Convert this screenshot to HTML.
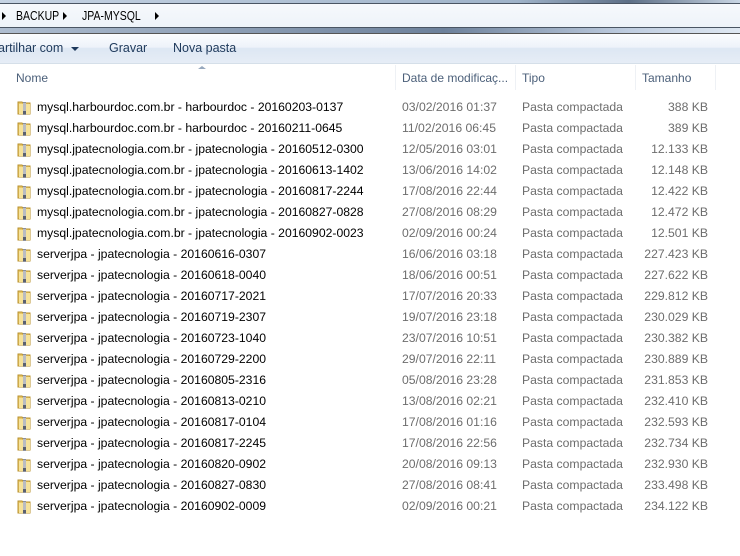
<!DOCTYPE html>
<html><head><meta charset="utf-8"><style>
*{margin:0;padding:0;box-sizing:border-box}
body{width:740px;height:556px;overflow:hidden;background:#fff;font-family:"Liberation Sans",sans-serif;font-size:12px;position:relative}
.top{position:absolute;left:0;top:0;width:740px;height:4px;background:linear-gradient(90deg,#c5d3e3,#9fb3c9 70%,#5d6f86 85%,#c9d6e4)}
.addr{position:absolute;left:-2px;top:3px;width:760px;height:25px;border:1px solid #4a5563;background:linear-gradient(#f6f9fc,#eef3f9);}
.addr span{position:absolute;top:5px;font-size:12.5px;color:#000;transform-origin:0 0;transform:scaleX(0.84)}
.tri{position:absolute;top:8px;width:0;height:0;border-top:4px solid transparent;border-bottom:4px solid transparent;border-left:4px solid #000}
.band{position:absolute;left:0;top:28px;width:740px;height:6px;background:linear-gradient(90deg,#aebdd0,#6d819b 60%,#bfcde0 85%,#dfe8f2);border-bottom:1px solid #555}
.tool{position:absolute;left:0;top:34px;width:740px;height:30px;background:linear-gradient(#fbfcfe,#eef3fa 45%,#dde7f3 50%,#e6edf6);border-bottom:1px solid #d5dfe9}
.tool span{position:absolute;top:7px;font-size:12.5px;color:#1e395b}
.hdr{position:absolute;top:65px;height:25px;width:740px}
.hdr span{position:absolute;top:6px;color:#4c607a;font-size:12px}
.sep{position:absolute;top:0;width:1px;height:25px;background:#eef1f5}
.row{position:absolute;left:0;width:740px;height:21px;line-height:21px;font-size:12.2px}
.row .n{position:absolute;left:37px;color:#000}
.row .d{position:absolute;left:402px;color:#6d6d6d}
.row .t{position:absolute;left:522px;color:#6d6d6d}
.row .s{position:absolute;right:32px;color:#6d6d6d}
.ic{position:absolute;left:17px;top:3px;width:14px;height:15px}
</style></head><body>
<div class="top"></div>
<div class="addr">
<div class="tri" style="left:3px"></div><span style="left:17px">BACKUP</span>
<div class="tri" style="left:64px"></div><span style="left:83px">JPA-MYSQL</span>
<div class="tri" style="left:156px"></div>
</div>
<div class="band"></div>
<div class="tool">
<span style="left:-2px">artilhar com</span>
<div style="position:absolute;left:71px;top:13px;border-left:4px solid transparent;border-right:4px solid transparent;border-top:4px solid #1e395b"></div>
<span style="left:109px">Gravar</span>
<span style="left:173px">Nova pasta</span>
</div>
<div style="position:absolute;left:198px;top:66px;border-left:4px solid transparent;border-right:4px solid transparent;border-bottom:3px solid #97a8bd"></div>
<div class="hdr">
<span style="left:16px">Nome</span>
<div class="sep" style="left:395px"></div><span style="left:402px">Data de modificaç...</span>
<div class="sep" style="left:515px"></div><span style="left:522px">Tipo</span>
<div class="sep" style="left:635px"></div><span style="left:642px">Tamanho</span>
<div class="sep" style="left:715px"></div>
</div>
<div id="rows"></div>
<script>
var d=[["mysql.harbourdoc.com.br - harbourdoc - 20160203-0137","03/02/2016 01:37","388 KB"],
["mysql.harbourdoc.com.br - harbourdoc - 20160211-0645","11/02/2016 06:45","389 KB"],
["mysql.jpatecnologia.com.br - jpatecnologia - 20160512-0300","12/05/2016 03:01","12.133 KB"],
["mysql.jpatecnologia.com.br - jpatecnologia - 20160613-1402","13/06/2016 14:02","12.148 KB"],
["mysql.jpatecnologia.com.br - jpatecnologia - 20160817-2244","17/08/2016 22:44","12.422 KB"],
["mysql.jpatecnologia.com.br - jpatecnologia - 20160827-0828","27/08/2016 08:29","12.472 KB"],
["mysql.jpatecnologia.com.br - jpatecnologia - 20160902-0023","02/09/2016 00:24","12.501 KB"],
["serverjpa - jpatecnologia - 20160616-0307","16/06/2016 03:18","227.423 KB"],
["serverjpa - jpatecnologia - 20160618-0040","18/06/2016 00:51","227.622 KB"],
["serverjpa - jpatecnologia - 20160717-2021","17/07/2016 20:33","229.812 KB"],
["serverjpa - jpatecnologia - 20160719-2307","19/07/2016 23:18","230.029 KB"],
["serverjpa - jpatecnologia - 20160723-1040","23/07/2016 10:51","230.382 KB"],
["serverjpa - jpatecnologia - 20160729-2200","29/07/2016 22:11","230.889 KB"],
["serverjpa - jpatecnologia - 20160805-2316","05/08/2016 23:28","231.853 KB"],
["serverjpa - jpatecnologia - 20160813-0210","13/08/2016 02:21","232.410 KB"],
["serverjpa - jpatecnologia - 20160817-0104","17/08/2016 01:16","232.593 KB"],
["serverjpa - jpatecnologia - 20160817-2245","17/08/2016 22:56","232.734 KB"],
["serverjpa - jpatecnologia - 20160820-0902","20/08/2016 09:13","232.930 KB"],
["serverjpa - jpatecnologia - 20160827-0830","27/08/2016 08:41","233.498 KB"],
["serverjpa - jpatecnologia - 20160902-0009","02/09/2016 00:21","234.122 KB"]];
var ic='<svg class="ic" viewBox="0 0 14 15"><path d="M1 2h4l1 1h7v11H1z" fill="#e8c766" stroke="#b8912e"/><rect x="2" y="4" width="11" height="10" fill="#f6e29a"/><rect x="6" y="2" width="3" height="13" fill="#8b8f9a"/><path d="M6 4h3M6 6h3M6 8h3M6 10h3" stroke="#e8e8e8"/><rect x="6" y="11" width="3" height="3" fill="#5a6070"/></svg>';
var h='';d.forEach(function(r,i){h+='<div class="row" style="top:'+(97+21*i)+'px">'+ic+'<span class="n">'+r[0]+'</span><span class="d">'+r[1]+'</span><span class="t">Pasta compactada</span><span class="s">'+r[2]+'</span></div>';});
document.getElementById('rows').innerHTML=h;
</script>
</body></html>
